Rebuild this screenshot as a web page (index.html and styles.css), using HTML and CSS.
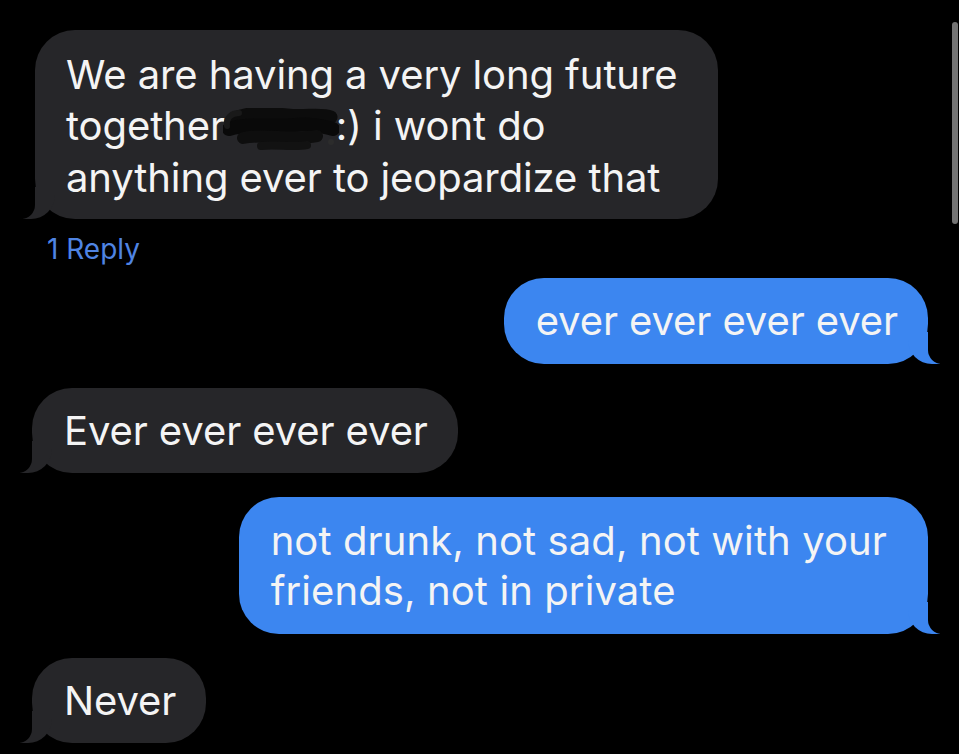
FILE: index.html
```html
<!DOCTYPE html>
<html lang="en">
<head>
<meta charset="utf-8">
<title>Messages</title>
<link rel="stylesheet" href="styles.css">
</head>
<body>
<div class="screen">
  <div class="thread">
    <div class="row row-in">
      <div class="bubble bubble-in bubble-first">We are having a very long future<br>together<span class="redact"><svg viewBox="0 0 116 44" width="116" height="44" aria-hidden="true"><path d="M10 11 C26 3 46 5 64 7 C82 9 98 5 108 9" stroke="#0c0c0c" stroke-width="13" fill="none" stroke-linecap="round"/><path d="M6 21 C24 15 50 19 72 17 C90 15 102 19 110 21" stroke="#090909" stroke-width="14" fill="none" stroke-linecap="round"/><path d="M20 30 C44 25 66 33 94 28" stroke="#0e0e0e" stroke-width="12" fill="none" stroke-linecap="round"/><path d="M38 38 C54 36 70 40 84 37" stroke="#121212" stroke-width="8" fill="none" stroke-linecap="round"/><path d="M4 18 C3 10 8 5 16 5" stroke="#191919" stroke-width="6" fill="none" stroke-linecap="round"/><circle cx="108" cy="34" r="3" fill="#2c2c2c"/></svg></span>:) i wont do<br>anything ever to jeopardize that</div>
    </div>
    <div class="reply-count">1 Reply</div>
    <div class="row row-out">
      <div class="bubble bubble-out">ever ever ever ever</div>
    </div>
    <div class="row row-in">
      <div class="bubble bubble-in">Ever ever ever ever</div>
    </div>
    <div class="row row-out">
      <div class="bubble bubble-out bubble-two">not drunk, not sad, not with your<br>friends, not in private</div>
    </div>
    <div class="row row-in">
      <div class="bubble bubble-in">Never</div>
    </div>
  </div>
  <div class="scrollbar"></div>
</div>
</body>
</html>
```
FILE: styles.css
```css
html, body {
  margin: 0;
  padding: 0;
  background: #000;
}
.screen {
  position: relative;
  width: 959px;
  height: 754px;
  overflow: hidden;
  background: #000;
}
.thread {
  display: flex;
  flex-direction: column;
  padding: 30px 31px 0 32px;
  font-family: Inter, "Noto Sans", sans-serif;
  color: #f4f4f4;
}
.row {
  display: flex;
}
.row-in { justify-content: flex-start; }
.row-out { justify-content: flex-end; }
.row + .row { margin-top: 24px; }
.bubble {
  position: relative;
  font-size: 40px;
  line-height: 50px;
  padding: 18px 30px 17px 32px;
  border-radius: 40px;
  white-space: nowrap;
  letter-spacing: -0.1px;
}
.bubble-in { background: #262629; }
.bubble-out { background: #3c86f0; }
.bubble-out { padding-top: 18px; padding-bottom: 18px; }
.bubble-first {
  padding: 19px 41px 16px 31px;
  line-height: 51px;
  margin-left: 3px;
}
.bubble-two {
  padding-top: 19px;
  padding-bottom: 18px;
  padding-right: 41px;
  letter-spacing: 0.1px;
}

.bubble::before,
.bubble::after {
  content: "";
  position: absolute;
  bottom: 0;
  height: 32px;
}
.bubble-in::before {
  left: -12px;
  width: 32px;
  background: #262629;
  border-bottom-right-radius: 24px;
}
.bubble-in::after {
  left: -22px;
  width: 22px;
  background: #000;
  border-bottom-right-radius: 14px;
}
.bubble-out::before {
  right: -12px;
  width: 32px;
  background: #3c86f0;
  border-bottom-left-radius: 24px;
}
.bubble-out::after {
  right: -22px;
  width: 22px;
  background: #000;
  border-bottom-left-radius: 14px;
}
.redact {
  display: inline-block;
  width: 116px;
  height: 44px;
  vertical-align: -12px;
  margin: 0 -3px 0 -2px;
}
.redact svg { display: block; }
.reply-count {
  font-size: 28px;
  line-height: 30px;
  color: #4f84e3;
  padding: 15px 0 14px 15px;
}
.reply-count + .row { margin-top: 0; }
.scrollbar {
  position: absolute;
  top: 22px;
  left: 952px;
  width: 6px;
  height: 202px;
  border-radius: 3px;
  background: #737373;
}
```
